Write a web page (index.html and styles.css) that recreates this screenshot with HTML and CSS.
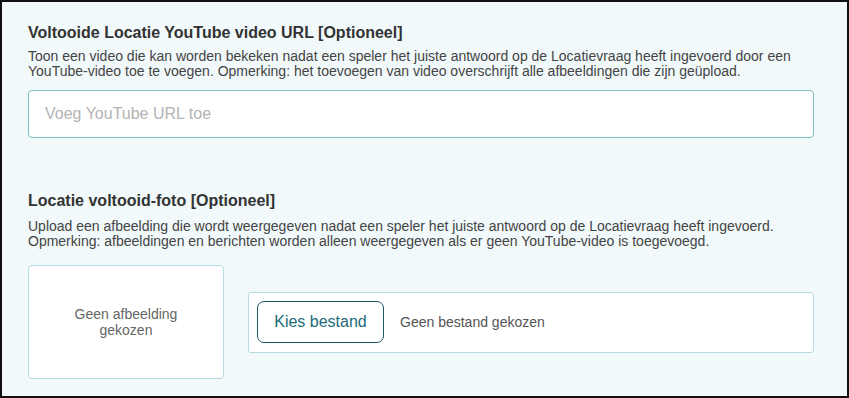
FILE: index.html
```html
<!DOCTYPE html>
<html lang="nl">
<head>
    <meta charset="UTF-8">
    <meta name="viewport" content="width=device-width, initial-scale=1.0">
    <title>Locatie voltooid</title>
    <link rel="stylesheet" href="styles.css">
</head>
<body>

<div class="page">
    <div class="field">
        <label class="field-title" for="yt-url">Voltooide Locatie YouTube video URL [Optioneel]</label>
        <p class="field-help">Toon een video die kan worden bekeken nadat een speler het juiste antwoord op de Locatievraag heeft ingevoerd door een YouTube-video toe te voegen. Opmerking: het toevoegen van video overschrijft alle afbeeldingen die zijn geüpload.</p>
        <input type="text" id="yt-url" class="text-input" placeholder="Voeg YouTube URL toe">
    </div>

    <div class="field field-photo">
        <div class="field-title">Locatie voltooid-foto [Optioneel]</div>
        <p class="field-help">Upload een afbeelding die wordt weergegeven nadat een speler het juiste antwoord op de Locatievraag heeft ingevoerd.<br>Opmerking: afbeeldingen en berichten worden alleen weergegeven als er geen YouTube-video is toegevoegd.</p>
        <div class="upload-row">
            <div class="preview">Geen afbeelding<br>gekozen</div>
            <div class="file-box">
                <button type="button" class="file-btn">Kies bestand</button>
                <span class="file-name">Geen bestand gekozen</span>
            </div>
        </div>
    </div>
</div>

</body>
</html>
```

FILE: styles.css
```css
* {
    box-sizing: border-box;
}
body {
    margin: 0;
    font-family: 'Liberation Sans', Arial, sans-serif;
}
.page {
    height: 398px;
    border: 2px solid #111;
    background-color: #f1f9fb;
    padding: 22px 33px 0 26px;
}
.field-title {
    display: block;
    font-size: 16px;
    font-weight: bold;
    line-height: 18px;
    color: #333;
}
.field-help {
    margin: 7px 0 11px;
    font-size: 14px;
    line-height: 15px;
    color: #444;
}
.text-input {
    display: block;
    width: 100%;
    height: 48px;
    padding: 0 16px;
    border: 1px solid #7dbdc4;
    border-radius: 4px;
    background: #fff;
    font-family: inherit;
    font-size: 16px;
    color: #333;
}
.text-input::placeholder {
    color: #b3b3b3;
}
.field-photo {
    margin-top: 54px;
}
.field-photo .field-help {
    margin-top: 9px;
}
.upload-row {
    display: flex;
    align-items: center;
    gap: 24px;
    margin-top: 16px;
}
.preview {
    width: 196px;
    height: 114px;
    flex: none;
    display: flex;
    align-items: center;
    justify-content: center;
    text-align: center;
    border: 1px solid #b4dce0;
    border-radius: 4px;
    background: #fff;
    font-size: 14px;
    line-height: 16px;
    color: #666;
}
.file-box {
    flex: 1;
    height: 61px;
    display: flex;
    align-items: center;
    gap: 16px;
    padding: 0 8px;
    border: 1px solid #b4dce0;
    border-radius: 3px;
    background: #fff;
}
.file-btn {
    width: 127px;
    height: 42px;
    border: 1px solid #1e5864;
    border-radius: 7px;
    background: #fff;
    font-family: inherit;
    font-size: 16px;
    color: #1b6a78;
    cursor: pointer;
}
.file-name {
    font-size: 14px;
    color: #555;
}
```
